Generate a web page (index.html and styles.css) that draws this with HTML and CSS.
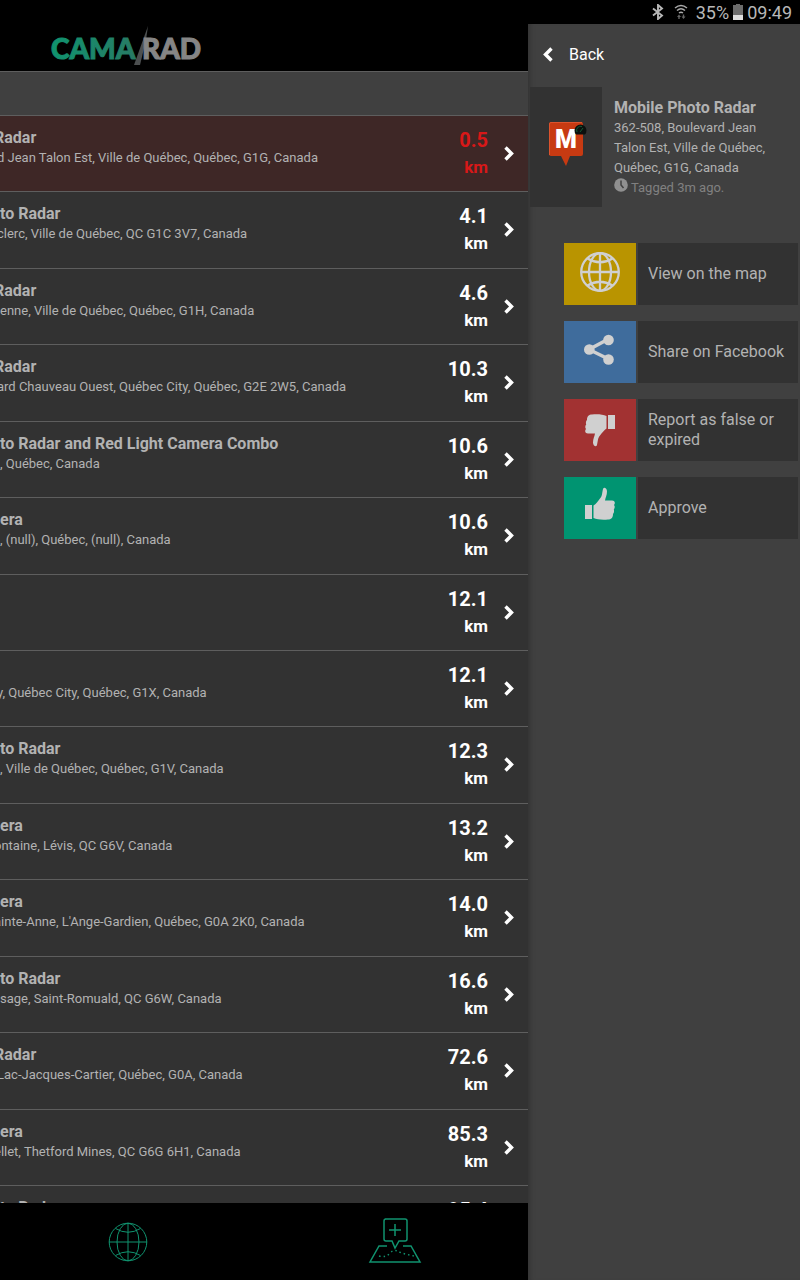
FILE: index.html
```html
<!DOCTYPE html>
<html lang="en">
<head>
    <meta charset="UTF-8">
    <meta name="viewport" content="width=device-width, initial-scale=1.0">
    <title>Camarad</title>
    <link rel="stylesheet" href="styles.css">
</head>
<body>
    <!-- Shared icons -->
    <svg class="sprite" aria-hidden="true">
        <symbol id="chevron" viewBox="0 0 10 15">
            <path d="M1.5 1.5 7.5 7.5 1.5 13.5" fill="none" stroke="currentColor" stroke-width="3.4"/>
        </symbol>
        <symbol id="globe" viewBox="0 0 40 40">
            <g fill="none" stroke="currentColor">
                <circle cx="20" cy="20" r="18.800"/>
                <ellipse cx="20" cy="20" rx="11" ry="18.800"/>
                <path d="M20 1v38M1 20h38M7.500 6.500Q20 14 32.500 6.500M7.500 33.500Q20 26 32.500 33.500"/>
            </g>
        </symbol>
        <symbol id="thumb" viewBox="0 0 30 33">
            <path d="M0 18h7v14H0zM8.500 18.500C11 17 13 14 15 11.500 17.500 9 17 5 18.200 1.500 19 0 22 1 22 4.500 22 8 20.500 10.500 20 13.500h7c3 0 3.500 3 2 4.500 1.200 1.500.8 3.500-.2 4.500.6 1.500.2 3.500-.8 4.500C28 31 26 32.500 23 32.500 17 33 12 32.500 8.500 31z" fill="currentColor"/>
        </symbol>
    </svg>

    <div class="status-bar">
        <svg width="12" height="16" viewBox="0 0 12 16"><path d="M1 4.500 10 11.500 6 15V1l4 3.500L1 11.500" fill="none" stroke="#b8b8b8" stroke-width="1.900"/></svg>
        <svg class="wifi" width="14" height="16" viewBox="0 0 14 16">
            <path d="M1 4Q7-1 13 4M3 6.500Q7 3 11 6.500M5 9Q7 7.500 9 9" fill="none" stroke="#aaa" stroke-width="1.500"/>
            <path d="M3 13l2-2.500L7 13H5.700v2H4.300v-2zM7.500 12.500h1.300v-2h1.400v2h1.300l-2 2.500z" fill="#666"/>
        </svg>
        <span>35%</span>
        <svg width="10" height="16" viewBox="0 0 10 16"><path d="M3 0h4v1h3v10H0V1h3z" fill="#6c6c6c"/><path d="M0 11h10v5H0z" fill="#ddd"/></svg>
        <span>09:49</span>
    </div>

    <div class="app">
        <div class="page">
            <header class="header">
                <svg class="logo" width="156" height="42" viewBox="0 0 156 42" role="img" aria-label="Camarad">
                    <defs>
                        <linearGradient id="green" x1="0" x2="1"><stop offset="0" stop-color="#10936f"/><stop offset="1" stop-color="#287a64"/></linearGradient>
                    </defs>
                    <text x="1" y="35" fill="url(#green)" stroke="url(#green)">CAMA</text>
                    <path d="M98 2 96 16 90 41H84z" fill="#4c4f50"/>
                    <text x="92" y="35" fill="#858585" stroke="#858585">RAD</text>
                </svg>
            </header>
            <div class="toolbar"></div>

            <ul class="list">
                <li class="row near">
                    <div class="info"><h2 class="cut-more">Radar</h2><p class="cut">d Jean Talon Est, Ville de Québec, Québec, G1G, Canada</p></div>
                    <div class="distance">0.5<small>km</small></div>
                    <svg class="chevron"><use href="#chevron"/></svg>
                </li>
                <li class="row">
                    <div class="info"><h2>to Radar</h2><p class="cut">clerc, Ville de Québec, QC G1C 3V7, Canada</p></div>
                    <div class="distance">4.1<small>km</small></div>
                    <svg class="chevron"><use href="#chevron"/></svg>
                </li>
                <li class="row">
                    <div class="info"><h2 class="cut-more">Radar</h2><p>enne, Ville de Québec, Québec, G1H, Canada</p></div>
                    <div class="distance">4.6<small>km</small></div>
                    <svg class="chevron"><use href="#chevron"/></svg>
                </li>
                <li class="row">
                    <div class="info"><h2 class="cut-more">Radar</h2><p class="cut">ard Chauveau Ouest, Québec City, Québec, G2E 2W5, Canada</p></div>
                    <div class="distance">10.3<small>km</small></div>
                    <svg class="chevron"><use href="#chevron"/></svg>
                </li>
                <li class="row">
                    <div class="info"><h2>to Radar and Red Light Camera Combo</h2><p>, Québec, Canada</p></div>
                    <div class="distance">10.6<small>km</small></div>
                    <svg class="chevron"><use href="#chevron"/></svg>
                </li>
                <li class="row">
                    <div class="info"><h2>era</h2><p>, (null), Québec, (null), Canada</p></div>
                    <div class="distance">10.6<small>km</small></div>
                    <svg class="chevron"><use href="#chevron"/></svg>
                </li>
                <li class="row">
                    <div class="info"></div>
                    <div class="distance">12.1<small>km</small></div>
                    <svg class="chevron"><use href="#chevron"/></svg>
                </li>
                <li class="row">
                    <div class="info"><h2></h2><p class="cut">y, Québec City, Québec, G1X, Canada</p></div>
                    <div class="distance">12.1<small>km</small></div>
                    <svg class="chevron"><use href="#chevron"/></svg>
                </li>
                <li class="row">
                    <div class="info"><h2>to Radar</h2><p>, Ville de Québec, Québec, G1V, Canada</p></div>
                    <div class="distance">12.3<small>km</small></div>
                    <svg class="chevron"><use href="#chevron"/></svg>
                </li>
                <li class="row">
                    <div class="info"><h2>era</h2><p class="cut-more">ontaine, Lévis, QC G6V, Canada</p></div>
                    <div class="distance">13.2<small>km</small></div>
                    <svg class="chevron"><use href="#chevron"/></svg>
                </li>
                <li class="row">
                    <div class="info"><h2>era</h2><p class="cut-more">ainte-Anne, L'Ange-Gardien, Québec, G0A 2K0, Canada</p></div>
                    <div class="distance">14.0<small>km</small></div>
                    <svg class="chevron"><use href="#chevron"/></svg>
                </li>
                <li class="row">
                    <div class="info"><h2>to Radar</h2><p>sage, Saint-Romuald, QC G6W, Canada</p></div>
                    <div class="distance">16.6<small>km</small></div>
                    <svg class="chevron"><use href="#chevron"/></svg>
                </li>
                <li class="row">
                    <div class="info"><h2 class="cut-more">Radar</h2><p class="cut">Lac-Jacques-Cartier, Québec, G0A, Canada</p></div>
                    <div class="distance">72.6<small>km</small></div>
                    <svg class="chevron"><use href="#chevron"/></svg>
                </li>
                <li class="row">
                    <div class="info"><h2>era</h2><p class="cut-more">ellet, Thetford Mines, QC G6G 6H1, Canada</p></div>
                    <div class="distance">85.3<small>km</small></div>
                    <svg class="chevron"><use href="#chevron"/></svg>
                </li>
                <li class="row">
                    <div class="info"><h2>to Radar</h2></div>
                    <div class="distance">95.4</div>
                    <span class="chevron"></span>
                </li>
            </ul>

            <nav class="tabs">
                <span></span>
                <button class="tab" aria-label="Map"><svg width="40" height="40"><use href="#globe"/></svg></button>
                <button class="tab" aria-label="Tag a location">
                    <svg width="54" height="48" viewBox="0 0 54 48" fill="none" stroke="currentColor" stroke-width="1.500">
                        <path d="M17 1h20q2 0 2 2v18q0 2-2 2h-6l-4 7-3-7h-6q-2 0-2-2V3q0-2 2-2zM27 6v12M21 12h12M19 28h-8L2 44h50L43 28h-8"/>
                        <path d="M11 38Q18 40 22 35 27 30 33 35L46 38" stroke-dasharray="1.500 3"/>
                    </svg>
                </button>
            </nav>
        </div>

        <aside class="panel">
            <button class="back"><svg class="chevron"><use href="#chevron"/></svg>Back</button>

            <section class="details">
                <div class="pin">
                    <svg width="36" height="46" viewBox="0 0 36 46">
                        <path d="M3 1h30q2 0 2 2v30q0 2-2 2H22l-4 10-5-10H3q-2 0-2-2V3q0-2 2-2z" fill="#c73a12"/>
                        <path d="M1.500 34V3q0-1.500 1.500-1.500h31" fill="none" stroke="#dc532d"/>
                        <text x="18" y="27" text-anchor="middle">M</text>
                        <path d="M28 13.500A6 6 0 1 1 37 13.500z" fill="#0b100e"/>
                        <path d="M29 11A4 4 0 0 1 34 5.500M32 11l3-4" fill="none" stroke="#145c35"/>
                    </svg>
                </div>
                <div class="summary">
                    <h2>Mobile Photo Radar</h2>
                    <p>362-508, Boulevard Jean Talon Est, Ville de Québec, Québec, G1G, Canada</p>
                    <p class="tagged">
                        <svg width="14" height="14" viewBox="0 0 14 14"><circle cx="7" cy="7" r="6.800" fill="#909090"/><path d="M7 2.500V7l2.500 3" fill="none" stroke="#404040" stroke-width="1.500"/></svg>
                        Tagged 3m ago.
                    </p>
                </div>
            </section>

            <div class="actions">
                <button class="action">
                    <span class="icon yellow"><svg width="40" height="40" stroke-width="2.300"><use href="#globe"/></svg></span>
                    <span class="label">View on the map</span>
                </button>
                <button class="action">
                    <span class="icon blue">
                        <svg width="32" height="40" viewBox="0 0 32 40"><path d="M24.500 9 5 19.500l19.500 9.500" fill="none" stroke="currentColor" stroke-width="3.500"/><g fill="currentColor"><circle cx="24.500" cy="10" r="5.300"/><circle cx="5.300" cy="19.500" r="5.300"/><circle cx="24.500" cy="29.500" r="5.300"/></g></svg>
                    </span>
                    <span class="label">Share on Facebook</span>
                </button>
                <button class="action">
                    <span class="icon red"><svg width="30" height="38" viewBox="0 0 30 38"><use href="#thumb" width="30" height="33" transform="rotate(180 15 19)"/></svg></span>
                    <span class="label">Report as false or expired</span>
                </button>
                <button class="action">
                    <span class="icon green"><svg width="30" height="38" viewBox="0 0 30 38"><use href="#thumb" width="30" height="33"/></svg></span>
                    <span class="label">Approve</span>
                </button>
            </div>
        </aside>
    </div>
</body>
</html>
```
FILE: styles.css
```css
/* Basic Reset */
* {
    margin: 0;
    padding: 0;
    box-sizing: border-box;
}

:root {
    --panel-width: 272px;
    --bg-color: #404040;
    --row-color: #323232;
    --line-color: #5e5e5e;
    --text-color: #b2b2b2;
    --green: #10936f;
}

body {
    display: flex;
    flex-direction: column;
    height: 100vh;
    overflow: hidden;
    font-family: Roboto, sans-serif;
    background: var(--bg-color);
    color: var(--text-color);
}

button {
    border: none;
    background: none;
    font: inherit;
    color: inherit;
    text-align: left;
    cursor: pointer;
}

.sprite {
    display: none;
}

.status-bar {
    display: flex;
    align-items: center;
    justify-content: flex-end;
    gap: 4px;
    height: 24px;
    padding-right: 8px;
    background: #000;
    color: #b8b8b8;
    font-size: 18px;
}

.wifi {
    margin: 0 4px 0 6px;
}

/* The page is pushed to the left by the open panel */
.app {
    display: flex;
    flex: 1;
    min-height: 0;
}

.page {
    display: flex;
    flex-direction: column;
    flex: 0 0 100%;
    margin-left: calc(0px - var(--panel-width));
}

.header {
    display: flex;
    justify-content: center;
    height: 48px;
    background: #000;
    border-bottom: 1px solid var(--line-color);
}

.logo text {
    font-family: Lato, sans-serif;
    font-size: 28px;
    font-weight: 900;
}

.toolbar {
    height: 43px;
}

.list {
    display: grid;
    grid-template-rows: repeat(14, 1fr) 18px;
    flex: 1;
    min-height: 0;
    overflow: hidden;
    list-style: none;
}

.row {
    display: flex;
    align-items: flex-start;
    padding: 11px 14px 0 var(--panel-width);
    overflow: hidden;
    background: var(--row-color);
    border-top: 1px solid var(--line-color);
}

.row.near {
    background: #3e2726;
}

.info {
    flex: 1;
    white-space: nowrap;
}

h2 {
    min-height: 21px;
    font-size: 16px;
    line-height: 21px;
}

.info p {
    font-size: 13px;
    line-height: 20px;
}

/* First letter runs under the edge of the screen */
.cut {
    margin-left: -3px;
}

.cut-more {
    margin-left: -6px;
}

.distance {
    color: #fff;
    font-size: 20px;
    font-weight: bold;
    line-height: 27px;
    text-align: right;
}

.near .distance {
    color: #d81818;
}

.distance small {
    display: block;
    font-size: 17px;
}

.chevron {
    width: 10px;
    height: 15px;
    color: #fff;
}

.row .chevron {
    margin: 19px 0 0 16px;
}

.tabs {
    display: grid;
    grid-template-columns: repeat(3, 1fr);
    height: 77px;
    background: #000;
}

.tab {
    display: flex;
    align-items: center;
    justify-content: center;
    color: var(--green);
}

/* Side panel */
.panel {
    flex: 0 0 var(--panel-width);
    padding: 0 2px;
    background: var(--bg-color);
    box-shadow: inset 6px 0 5px -4px #333;
}

.back {
    display: flex;
    align-items: center;
    gap: 16px;
    width: 100%;
    height: 63px;
    padding: 0 0 2px 13px;
    color: #fff;
    font-size: 16px;
}

.back .chevron {
    transform: rotate(180deg);
}

.details {
    display: flex;
    gap: 12px;
}

.pin {
    display: flex;
    align-items: center;
    justify-content: center;
    flex: 0 0 72px;
    min-height: 120px;
    padding-bottom: 6px;
    background: var(--row-color);
}

.pin svg {
    overflow: visible;
}

.pin text {
    fill: #fff;
    font-size: 25px;
    font-weight: 900;
}

.summary {
    padding: 10px 20px 0 0;
}

.summary p {
    font-size: 13px;
    line-height: 20px;
}

.summary .tagged {
    color: #808080;
}

.actions {
    display: flex;
    flex-direction: column;
    gap: 16px;
    padding: 36px 0 0 34px;
}

.action {
    display: flex;
    gap: 2px;
    min-height: 62px;
}

.icon {
    display: flex;
    justify-content: center;
    align-items: center;
    flex: 0 0 72px;
    padding-bottom: 5px;
    color: #d0d0d0;
}

.yellow {
    background: #b99400;
}

.blue {
    background: #3f6c9c;
}

.red {
    background: #a23232;
}

.green {
    background: #009471;
}

.label {
    display: flex;
    align-items: center;
    flex: 1;
    padding: 0 10px;
    background: var(--row-color);
    font-size: 16px;
    line-height: 20px;
}
```
